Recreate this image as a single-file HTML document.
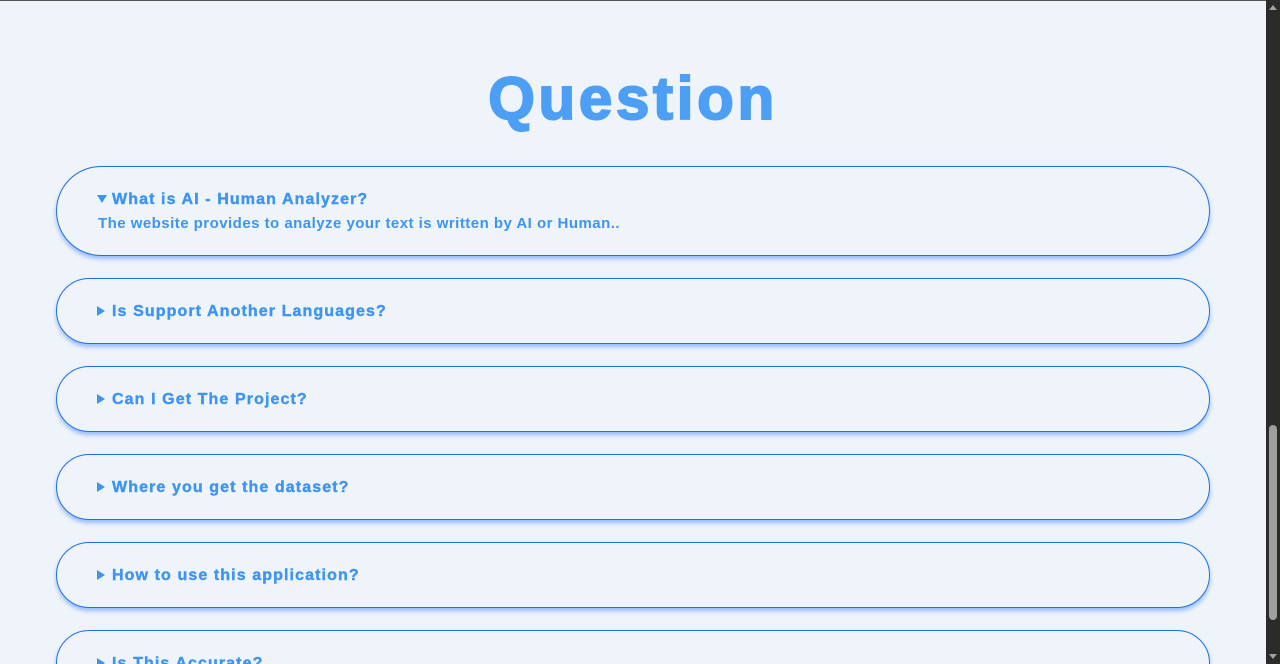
<!DOCTYPE html>
<html><head><style>
html,body{margin:0;padding:0;overflow:hidden;height:664px;}
body{width:1280px;background:#eff4fa;font-family:"Liberation Sans",Arial,sans-serif;position:relative;}
.topline{position:absolute;left:0;top:0;width:1266px;height:1px;background:#555;}
.sb{position:absolute;right:0;top:0;width:14px;height:664px;background:#2b2b2b;}
.thumb{position:absolute;left:3px;top:425px;width:8px;height:195px;background:#9f9f9f;border-radius:4px;}
.up{position:absolute;left:3px;top:5px;width:0;height:0;border-left:4px solid transparent;border-right:4px solid transparent;border-bottom:5px solid #a0a0a0;}
.dn{position:absolute;left:3px;bottom:5px;width:0;height:0;border-left:4px solid transparent;border-right:4px solid transparent;border-top:5px solid #a0a0a0;}
h1{position:absolute;left:0;width:1266px;top:67px;margin:0;text-align:center;font-size:60px;font-weight:900;color:#4d9ff5;line-height:64px;letter-spacing:3.7px;-webkit-text-stroke:2px #4d9ff5;}
.card{position:absolute;left:56px;width:1154px;border:1px solid #1f6fe0;border-radius:46px;box-shadow:0 3px 4px rgba(40,120,255,.45);box-sizing:border-box;}
.q{position:absolute;left:40px;font-size:16px;font-weight:bold;color:#3d94f2;letter-spacing:1.1px;white-space:nowrap;-webkit-text-stroke:0.4px #3d94f2;}
.a{position:absolute;left:41px;top:48px;font-size:15px;font-weight:bold;color:#3d94f2;letter-spacing:0.47px;white-space:nowrap;}
.tri{display:inline-block;width:0;height:0;border-top:5px solid transparent;border-bottom:5px solid transparent;border-left:8px solid #3d94f2;margin-right:7px;vertical-align:0px;}
.trid{display:inline-block;width:0;height:0;border-left:5px solid transparent;border-right:5px solid transparent;border-top:8px solid #3d94f2;margin-right:5px;vertical-align:1px;}
</style></head><body>
<div class="topline"></div>
<h1>Question</h1>
<div class="card" style="top:166px;height:90px;"><div class="q" style="top:24px;"><span class="trid"></span>What is AI - Human Analyzer?</div><div class="a">The website provides to analyze your text is written by AI or Human..</div></div>
<div class="card" style="top:278px;height:66px;"><div class="q" style="top:24px;"><span class="tri"></span>Is Support Another Languages?</div></div>
<div class="card" style="top:366px;height:66px;"><div class="q" style="top:24px;"><span class="tri"></span>Can I Get The Project?</div></div>
<div class="card" style="top:454px;height:66px;"><div class="q" style="top:24px;"><span class="tri"></span>Where you get the dataset?</div></div>
<div class="card" style="top:542px;height:66px;"><div class="q" style="top:24px;"><span class="tri"></span>How to use this application?</div></div>
<div class="card" style="top:630px;height:66px;"><div class="q" style="top:24px;"><span class="tri"></span>Is This Accurate?</div></div>
<div class="sb"><div class="up"></div><div class="thumb"></div><div class="dn"></div></div>
</body></html>
